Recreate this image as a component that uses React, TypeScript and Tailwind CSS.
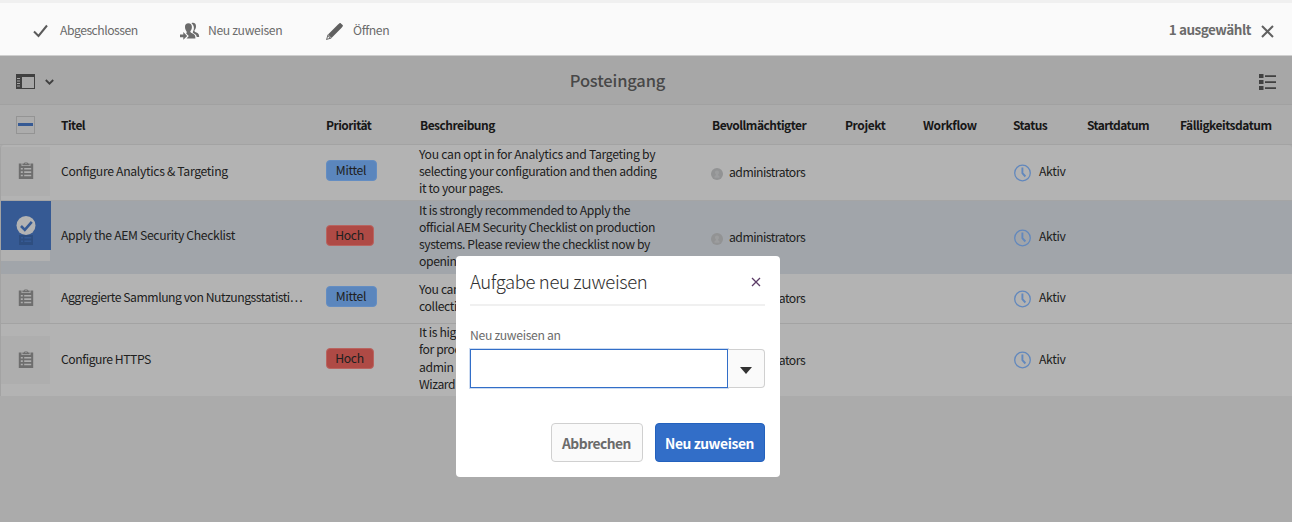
import React from "react";

const columns =
  "grid grid-cols-[60px_265px_94px_292px_133px_78px_90px_74px_93px_1fr]";

function ClipboardIcon({ className }: { className: string }) {
  return (
    <svg viewBox="0 0 16 18" className={className} fill="currentColor">
      <path
        fillRule="evenodd"
        d="M.8 2.500H3.500V5h9V2.500h2.700V18H.8zM2.800 7v1.500h2V7zm3.400 0v1.500h7V7zM2.800 10.300v1.600h2v-1.600zm3.400 0v1.600h7v-1.600zM2.800 13.800v1.500h2v-1.500zm3.400 0v1.500h7v-1.500z"
      />
      <path fillRule="evenodd" d="M4.400 4.200V2.500h1.500a2.200 2.200 0 0 1 4.200 0h1.500v1.700zM8 1.400a1 1 0 0 0-1 1.100h2a1 1 0 0 0-1-1.100z" />
    </svg>
  );
}

function ClockIcon() {
  return (
    <svg viewBox="0 0 18 18" className="h-[18px] w-[18px]" fill="none" stroke="#6288bd">
      <circle cx="8.500" cy="9" r="7.800" strokeWidth="1.300" />
      <path d="M8.400 3.500v5.700l3 3.300" strokeWidth="1.900" />
    </svg>
  );
}

function AvatarIcon() {
  return (
    <svg viewBox="0 0 12 12" className="mt-px h-3 w-3">
      <circle cx="6" cy="6" r="6" fill="#929394" />
      <path d="M6 2.400c1.300 0 2 .9 2 2.100 0 .9-.4 1.500-.9 1.900v.8L8.500 8.300v1.500h-5V8.300l1.400-1.100v-.8C4.400 6 4 5.400 4 4.500c0-1.200.7-2.100 2-2.100z" fill="#9c9d9e" />
    </svg>
  );
}

function ReassignIcon() {
  return (
    <svg viewBox="0 0 20 18" className="h-[18px] w-5" fill="#6b6b6b">
      <path d="M11.500 1.200c1.800-.9 4.400-.2 4.500 2.900.1 1.700-.5 3-1.300 4-.5.600-.3 1.300.5 1.800l2.300 1.200c1.200.7 1.600 2 1.700 4h-2.500c-.1-1.600-.7-2.500-2-3.200l-1.500-.9c-.6-.4-.5-1-.1-1.700 1.200-2.100 1.400-5.600-1.600-8.100z" />
      <path d="M8.400 1.200c2.300 0 3.500 1.500 3.500 3.700 0 1.800-.6 3-1.300 3.900-.5.700-.3 1.500.5 1.900l2.500 1.300c1.300.7 1.800 1.900 1.800 4.600H6.500l2.300-2.500-2.600-2.600c.7-.7.700-1.500.1-2.400C5.400 7.700 5 6.400 5 4.700c0-2.200 1.200-3.500 3.400-3.500z" />
      <path d="M0 12.500h3.300v-2.400L7.200 14l-3.900 3.800v-2.500H0z" />
    </svg>
  );
}

function Action({ icon, label, className }: { icon: React.ReactNode; label: string; className: string }) {
  return (
    <button className={`flex items-center text-[12.200px] text-[#6b6b6b] ${className}`}>
      {icon}
      <span className="whitespace-nowrap pt-px leading-4">{label}</span>
    </button>
  );
}

interface Task {
  title: string;
  titleClass: string;
  high: boolean;
  lines: string[];
  linesClass: string;
  selected?: boolean;
  height: string;
  thumb: string;
}

const tasks: Task[] = [
  {
    title: "Configure Analytics & Targeting",
    titleClass: "tracking-[-0.320px] pb-[3px]",
    high: false,
    lines: [
      "You can opt in for Analytics and Targeting by",
      "selecting your configuration and then adding",
      "it to your pages.",
    ],
    linesClass: "pt-[0.500px] first-line:tracking-[-0.290px]",
    height: "h-14 border-b border-[#a5a5a5]",
    thumb: "mt-0.5 h-[49px]",
  },
  {
    title: "Apply the AEM Security Checklist",
    titleClass: "tracking-[-0.340px] pb-1",
    high: true,
    lines: [
      "It is strongly recommended to Apply the",
      "official AEM Security Checklist on production",
      "systems. Please review the checklist now by",
      "opening",
    ],
    linesClass: "pt-[0.500px]",
    selected: true,
    height: "h-[73px]",
    thumb: "h-[60px]",
  },
  {
    title: "Aggregierte Sammlung von Nutzungsstatisti…",
    titleClass: "tracking-[-0.470px] pb-[3px]",
    high: false,
    lines: ["You can", "collectio"],
    linesClass: "pt-[6.500px]",
    height: "h-[49px]",
    thumb: "h-[49px]",
  },
  {
    title: "Configure HTTPS",
    titleClass: "tracking-[-0.450px] pb-0.5",
    high: true,
    lines: ["It is high", "for prod", "admin", "Wizard"],
    linesClass: "",
    height: "h-[73px] border-t border-[#a3a3a3]",
    thumb: "mt-3 h-12",
  },
];

function TaskRow({ task }: { task: Task }) {
  return (
    <div className={`${columns} ${task.height} ${task.selected ? "bg-[#a1a5aa]" : "bg-[#b3b3b3]"} text-[12.200px] text-[#202020]`}>
      {task.selected ? (
        <div className={`w-[50px] ${task.thumb}`}>
          <div className="flex h-[49px] flex-col items-center bg-[#365a94] pt-[15px]">
            <svg viewBox="0 0 20 19" className="h-[19px] w-5 shrink-0">
              <circle cx="10" cy="9.500" r="9.500" fill="#b3b3b3" />
              <path d="M5 10l3.800 3.800 7-8" fill="none" stroke="#365a94" strokeWidth="2.600" />
            </svg>
            <svg viewBox="0 0 16 10" className="h-[10px] w-4" fill="#2e4e80">
              <path fillRule="evenodd" d="M1 0h14v10H1zM3 2v1.500h2V2zm3.400 0v1.500h6.800V2zM3 5.500V7h2V5.500zm3.400 0V7h6.800V5.500z" />
            </svg>
          </div>
          <div className="h-[11px] w-[49px] bg-[#b1b1b1]" />
        </div>
      ) : (
        <div className={`flex w-[49px] items-center justify-center bg-[#aeaeae] pb-[3px] ${task.thumb}`}>
          <ClipboardIcon className="h-[18px] w-4 text-[#6e6e6e]" />
        </div>
      )}
      <div className={`flex items-center whitespace-nowrap ${task.titleClass}`}>{task.title}</div>
      <div className="flex items-center pb-1 tracking-[-0.300px]">
        <span
          className={`flex h-[21px] items-center justify-center rounded border pr-px ${
            task.high ? "w-12 border-[#b96460] bg-[#af4a45]" : "w-[51px] border-[#648dc2] bg-[#5b86bd]"
          }`}
        >
          {task.high ? "Hoch" : "Mittel"}
        </span>
      </div>
      <div className={`-ml-px whitespace-nowrap leading-[17.300px] tracking-[-0.380px] ${task.linesClass}`}>
        {task.lines.map((line) => (
          <div key={line}>{line}</div>
        ))}
      </div>
      <div className="-ml-px flex items-center gap-[6px] pt-px tracking-[-0.500px]">
        <AvatarIcon />
        <span className="-mt-px">administrators</span>
      </div>
      <div />
      <div />
      <div className="flex items-center gap-2 pl-px tracking-[-0.300px]">
        <ClockIcon />
        <span className="-mt-0.5 -ml-px">Aktiv</span>
      </div>
      <div />
      <div />
    </div>
  );
}

function Dialog() {
  return (
    <section className="absolute left-[456px] top-64 flex h-[221px] w-[324px] flex-col rounded bg-white pb-[15px] pl-[14px] pr-[15px]">
      <header className="flex h-[50px] items-center justify-between border-b-2 border-[#f0f0f0] pr-1">
        <h2 className="pt-0.5 text-[18.500px] font-light leading-6 tracking-[-0.380px] text-[#303030]">Aufgabe neu zuweisen</h2>
        <svg viewBox="0 0 10 10" className="mt-1 h-[10px] w-[10px]" stroke="#5b3b66" strokeWidth="1.300">
          <path d="M1 1l8 8M9 1L1 9" />
        </svg>
      </header>
      <label className="mt-5 text-[12.200px] leading-[18px] tracking-[-0.320px] text-[#6b6b6b]">Neu zuweisen an</label>
      <div className="mt-[5px] flex h-[39px]">
        <div className="w-[258px] border border-[#326ec8] bg-white ring-1 ring-[#326ec8]/25" />
        <button className="flex w-[37px] items-center justify-center rounded-r border border-l-0 border-[#d0d0d0] bg-[#fafafa]">
          <svg viewBox="0 0 12 7" className="mt-1 h-[7px] w-3" fill="#323232">
            <path d="M0 0h12L6 7z" />
          </svg>
        </button>
      </div>
      <footer className="mt-auto flex justify-end gap-3 text-[13.800px] font-bold">
        <button className="h-[39px] w-[92px] rounded border border-[#d0d0d0] bg-[#fafafa] pt-0.5 pr-px tracking-[-0.500px] text-[#6b6b6b]">Abbrechen</button>
        <button className="h-[39px] w-[110px] rounded border border-[#2361bd] bg-[#326ec8] pt-0.5 pr-px tracking-[-0.380px] text-white">Neu zuweisen</button>
      </footer>
    </section>
  );
}

export default function App() {
  return (
    <main className="relative flex h-[522px] w-[1292px] flex-col overflow-hidden bg-[#ababab] font-['Noto_Sans_CJK_SC','Noto_Sans',sans-serif]">
      <nav className="flex h-14 items-center border-b border-t-[3px] border-b-[#cfcfcf] border-t-[#f0f0f0] bg-[#fafafa]">
        <Action
          className="ml-[33px] w-[147px] gap-3 tracking-[-0.500px]"
          label="Abgeschlossen"
          icon={
            <svg viewBox="0 0 15 14" className="mt-1 h-[14px] w-[15px]" fill="none" stroke="#5a5a5a" strokeWidth="2">
              <path d="M1 7.500l4.500 4.500L14 1.500" />
            </svg>
          }
        />
        <Action
          className="w-[146px] gap-2 tracking-[-0.350px]"
          label="Neu zuweisen"
          icon={<div className="mt-1"><ReassignIcon /></div>}
        />
        <Action
          className="gap-[10px] tracking-[-0.400px]"
          label="Öffnen"
          icon={
            <svg viewBox="0 0 17 17" className="mt-1 h-[17px] w-[17px]" fill="#606060">
              <path d="M12 1.500L13.500.3c.5-.4 1-.3 1.400.1l1.700 1.700c.4.400.4.900 0 1.400L15.400 5 5.500 15 2 11.500z" />
              <path fillRule="evenodd" d="M1.600 11.500L5.500 15.400 0 17zM2 13.300l-.7 2.400 2.400-.7z" />
            </svg>
          }
        />
        <div className="ml-auto mr-[18px] flex items-center gap-[10px] text-[13.500px] font-bold tracking-[-0.480px] text-[#6b6b6b]">
          <span>1 ausgewählt</span>
          <svg viewBox="0 0 13 13" className="mt-1 h-[13px] w-[13px]" stroke="#606060" strokeWidth="2">
            <path d="M1 1l11 11M12 1L1 12" />
          </svg>
        </div>
      </nav>
      <header className="flex h-[49px] items-center border-b border-[#a1a1a1] bg-[#a7a7a7] px-4">
        <div className="flex flex-1 items-center gap-[10px]">
          <svg viewBox="0 0 19 15" className="mt-[3px] h-[15px] w-[19px]">
            <path fillRule="evenodd" fill="#404040" d="M0 0h19v15H0zM6 3v11h12V3zM1 4v1h3V4zm0 2.500v1h3v-1zM1 9v1h3V9zm0 2.500v1h3v-1z" />
          </svg>
          <svg viewBox="0 0 9 6" className="mt-[3px] h-[6px] w-[9px]" fill="none" stroke="#404040" strokeWidth="1.800">
            <path d="M.8 1l3.700 3.700L8.200 1" />
          </svg>
        </div>
        <h1 className="text-[16.500px] font-medium tracking-[-0.150px] text-[#484848]">Posteingang</h1>
        <div className="flex flex-1 justify-end pl-[57px]">
          <svg viewBox="0 0 17 17" className="mt-1 h-[17px] w-[17px]" fill="#404040">
            <path d="M0 0h4.500v4H0zM0 6h4.500v4H0zM0 12h4.500v4H0zM6 1.200h11V3H6zM6 7.200h11V9H6zM6 13.200h11V15H6z" />
          </svg>
        </div>
      </header>
      <div className={`${columns} h-10 items-center border-b border-[#a3a3a3] bg-[#acacac] pl-px text-[12px] font-bold tracking-[-0.520px] text-[#171717]`}>
        <div className="ml-[15px] flex h-[18px] w-[19px] items-center justify-center border border-[#949494]">
          <div className="h-[3px] w-[15px] bg-[#365a94]" />
        </div>
        <span>Titel</span>
        <span>Priorität</span>
        <span>Beschreibung</span>
        <span>Bevollmächtigter</span>
        <span className="tracking-[-0.400px]">Projekt</span>
        <span className="tracking-[-0.400px]">Workflow</span>
        <span>Status</span>
        <span className="tracking-[-0.600px]">Startdatum</span>
        <span className="tracking-[-0.480px]">Fälligkeitsdatum</span>
      </div>
      <div className="overflow-hidden rounded-t border-l border-[#a3a3a3]">
        {tasks.map((task) => (
          <TaskRow key={task.title} task={task} />
        ))}
      </div>
      <Dialog />
    </main>
  );
}
